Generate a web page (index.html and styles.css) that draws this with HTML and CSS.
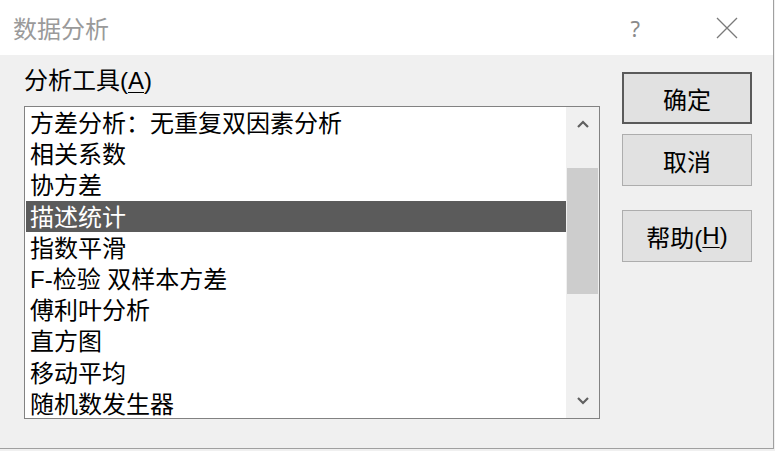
FILE: index.html
```html
<!DOCTYPE html>
<html lang="zh-CN">
<head>
<meta charset="utf-8">
<link rel="stylesheet" href="styles.css">
</head>
<body>
<div class="window">
  <div class="titlebar">
    <span class="title">数据分析</span>
    <span class="help">?</span>
    <span class="close">
      <svg width="22" height="22" viewBox="0 0 22 22"><path d="M1 1 L21 21 M21 1 L1 21" stroke="#7a7a7a" stroke-width="1.3" fill="none"/></svg>
    </span>
  </div>
  <div class="content">
    <div class="left">
      <div class="label">分析工具(<u>A</u>)</div>
      <div class="listbox">
        <ul class="items">
          <li>方差分析：无重复双因素分析</li>
          <li>相关系数</li>
          <li>协方差</li>
          <li class="sel">描述统计</li>
          <li>指数平滑</li>
          <li>F-检验 双样本方差</li>
          <li>傅利叶分析</li>
          <li>直方图</li>
          <li>移动平均</li>
          <li>随机数发生器</li>
        </ul>
        <div class="scrollbar">
          <div class="arrow">
            <svg width="14" height="10" viewBox="0 0 14 10"><path d="M2 8 L7 3 L12 8" stroke="#606060" stroke-width="2.2" fill="none"/></svg>
          </div>
          <div class="track"><div class="thumb"></div></div>
          <div class="arrow">
            <svg width="14" height="10" viewBox="0 0 14 10"><path d="M2 2 L7 7 L12 2" stroke="#606060" stroke-width="2.2" fill="none"/></svg>
          </div>
        </div>
      </div>
    </div>
    <div class="buttons">
      <div class="btn default">确定</div>
      <div class="btn">取消</div>
      <div class="btn help-btn">帮助(<u>H</u>)</div>
    </div>
  </div>
</div>
</body>
</html>
```
FILE: styles.css
```css
html, body {
  margin: 0;
  padding: 0;
  background: #f0f0f0;
}
body {
  width: 775px;
  height: 451px;
  overflow: hidden;
  font-family: "Liberation Sans", "Noto Sans CJK SC", sans-serif;
  color: #000;
}
.window {
  width: 773px;
  height: 448px;
  border-right: 1px solid #a0a0a0;
  border-bottom: 1px solid #a0a0a0;
  background: #f0f0f0;
}
.titlebar {
  height: 55px;
  background: #fff;
  display: flex;
  align-items: center;
}
.title {
  margin-left: 13px;
  font-size: 24px;
  color: #9a9a9a;
  flex: 1;
}
.help {
  font-family: "Noto Sans", sans-serif;
  font-size: 22px;
  color: #8a8a8a;
  margin-right: 76px;
}
.close {
  display: flex;
  margin-right: 35px;
}
.content {
  display: flex;
  padding-left: 24px;
}
.left {
  width: 576px;
}
.label {
  font-size: 24px;
  height: 51px;
  line-height: 51px;
}
.listbox {
  height: 311px;
  border: 1px solid #828282;
  background: #fff;
  display: flex;
}
.items {
  list-style: none;
  margin: 0;
  padding: 0 0 0 1px;
  flex: 1;
}
.items li {
  height: 31.2px;
  line-height: 33px;
  font-size: 24px;
  padding-left: 4px;
  white-space: nowrap;
}
.items li.sel {
  background: #5b5b5b;
  color: #fff;
}
.scrollbar {
  width: 33px;
  background: #f0f0f0;
  display: flex;
  flex-direction: column;
}
.arrow {
  height: 34px;
  display: flex;
  align-items: center;
  justify-content: center;
}
.track {
  flex: 1;
  padding-top: 27px;
}
.thumb {
  margin: 0 1px;
  height: 126px;
  background: #cdcdcd;
}
.buttons {
  margin-left: 22px;
  margin-top: 17px;
  display: flex;
  flex-direction: column;
}
.btn {
  width: 130px;
  height: 52px;
  border: 1px solid #adadad;
  background: #e1e1e1;
  font-size: 24px;
  display: flex;
  align-items: center;
  justify-content: center;
  box-sizing: border-box;
  margin-bottom: 10px;
}
.btn.default {
  border: 2px solid #5a5a5a;
}
.btn.help-btn {
  margin-top: 14px;
}
u {
  text-decoration-thickness: 1px;
  text-underline-offset: 3px;
}
```
